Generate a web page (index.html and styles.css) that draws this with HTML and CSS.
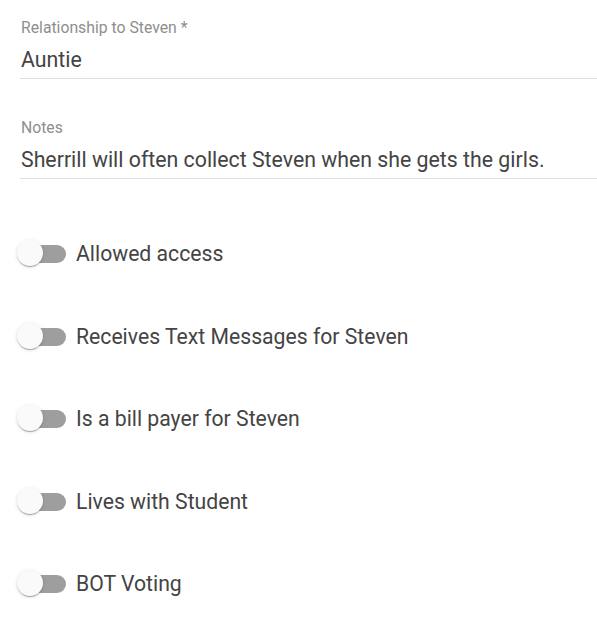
FILE: index.html
```html
<!DOCTYPE html>
<html lang="en">
<head>
    <meta charset="utf-8">
    <title>Contact details</title>
    <link rel="stylesheet" href="styles.css">
</head>
<body>

    <div class="form">

        <div class="field">
            <label class="field-label">Relationship to Steven *</label>
            <div class="field-value">Auntie</div>
        </div>

        <div class="field">
            <label class="field-label">Notes</label>
            <div class="field-value">Sherrill will often collect Steven when she gets the girls.</div>
        </div>

        <div class="toggles">
            <label class="toggle">
                <span class="switch"><span class="track"></span><span class="thumb"></span></span>
                <span class="toggle-text">Allowed access</span>
            </label>
            <label class="toggle">
                <span class="switch"><span class="track"></span><span class="thumb"></span></span>
                <span class="toggle-text">Receives Text Messages for Steven</span>
            </label>
            <label class="toggle">
                <span class="switch"><span class="track"></span><span class="thumb"></span></span>
                <span class="toggle-text">Is a bill payer for Steven</span>
            </label>
            <label class="toggle">
                <span class="switch"><span class="track"></span><span class="thumb"></span></span>
                <span class="toggle-text">Lives with Student</span>
            </label>
            <label class="toggle">
                <span class="switch"><span class="track"></span><span class="thumb"></span></span>
                <span class="toggle-text">BOT Voting</span>
            </label>
        </div>

    </div>

</body>
</html>
```

FILE: styles.css
```css
body {
    margin: 0;
    background-color: #fff;
    font-family: Roboto, "Liberation Sans", sans-serif;
}

.form {
    padding-left: 20px;
}

.field {
    display: flex;
    flex-direction: column;
    padding-top: 18px;
    margin-bottom: 21px;
    border-bottom: 1px solid #e0e0e0;
}

.field-label {
    font-size: 15.75px;
    line-height: 20px;
    color: #8e8e8e;
    padding-left: 1px;
}

.field-value {
    font-size: 21.3px;
    line-height: 28px;
    color: #444;
    margin-top: 8px;
    padding-bottom: 4px;
    padding-left: 1px;
}

.toggles {
    display: flex;
    flex-direction: column;
    gap: 52.5px;
    margin-top: 60px;
}

.toggle {
    display: flex;
    align-items: center;
    height: 30px;
    cursor: pointer;
}

.switch {
    position: relative;
    display: flex;
    align-items: center;
    width: 46px;
    height: 30px;
}

.track {
    display: block;
    width: 46px;
    height: 18px;
    border-radius: 9px;
    background-color: #9e9e9e;
}

.thumb {
    position: absolute;
    left: -3px;
    top: 1px;
    width: 26px;
    height: 26px;
    border-radius: 50%;
    background-color: #fafafa;
    box-shadow: 0 2px 1px -1px rgba(0, 0, 0, 0.2),
                0 1px 1px 0 rgba(0, 0, 0, 0.14),
                0 1px 4px 0 rgba(0, 0, 0, 0.12);
}

.toggle-text {
    font-size: 21.2px;
    line-height: 30px;
    color: #444;
    margin-left: 10px;
}
```
